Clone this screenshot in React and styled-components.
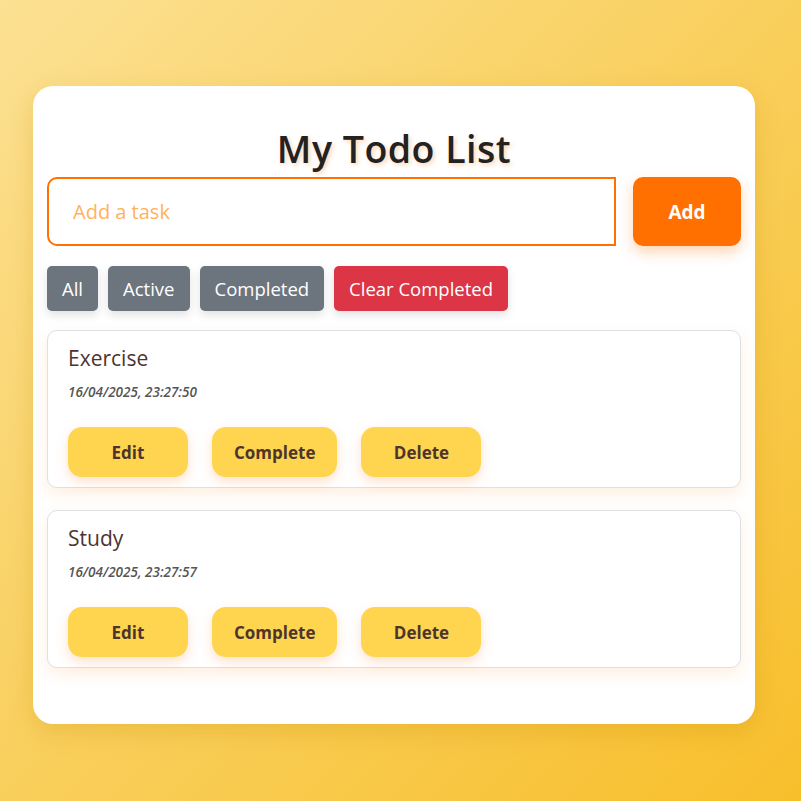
import React, { useState } from "react";
import styled, { createGlobalStyle } from "styled-components";

const Global = createGlobalStyle`
  html, body { margin: 0; padding: 0; }
  body {
    width: 801px;
    height: 801px;
    overflow: hidden;
    background: linear-gradient(135deg, #fce193 0%, #f9cf5c 50%, #f8bf2c 100%);
    font-family: "Open Sans", "Noto Sans", sans-serif;
  }
`;

const Page = styled.div`
  padding: 86px 46px 0 33px;
`;

const Card = styled.div`
  box-sizing: border-box;
  width: 722px;
  height: 638px;
  background: #fff;
  border-radius: 20px;
  box-shadow: 0 8px 24px rgba(200, 140, 0, 0.25);
  padding: 34px 14px 0 14px;
`;

const Title = styled.h1`
  margin: 0;
  text-align: center;
  font-size: 37.5px;
  line-height: 57px;
  font-weight: 600;
  color: #222;
  text-shadow: 2px 2px 4px rgba(255, 112, 0, 0.3);
  letter-spacing: 0.5px;
`;

const InputRow = styled.div`
  display: flex;
  gap: 17px;
  margin-bottom: 20px;
`;

const Input = styled.input`
  box-sizing: border-box;
  flex: 1;
  height: 69px;
  border: 2px solid #ff7000;
  border-radius: 10px 0 0 10px;
  padding: 0 24px;
  font-family: inherit;
  font-size: 20px;
  color: #333;
  outline: none;
  &::placeholder { color: #ffb25a; }
`;

const AddButton = styled.button`
  width: 108px;
  height: 69px;
  border: none;
  border-radius: 10px;
  background: #ff7000;
  color: #fff;
  font-family: inherit;
  font-size: 19px;
  font-weight: 700;
  box-shadow: 0 6px 14px rgba(255, 112, 0, 0.3);
  cursor: pointer;
`;

const Filters = styled.div`
  display: flex;
  gap: 10px;
  margin-bottom: 19px;
`;

const FilterButton = styled.button`
  height: 45px;
  padding: 0 15px;
  border: none;
  border-radius: 5px;
  background: ${(p) => (p.$danger ? "#dc3545" : "#6c757d")};
  color: #fff;
  font-family: inherit;
  font-size: 18.5px;
  box-shadow: 0 4px 10px rgba(0, 0, 0, 0.12);
  cursor: pointer;
`;

const List = styled.div`
  display: flex;
  flex-direction: column;
  gap: 22px;
`;

const TaskCard = styled.div`
  box-sizing: border-box;
  height: 158px;
  border: 1px solid #dde0e4;
  border-radius: 10px;
  padding: 12px 20px 0;
  box-shadow: 0 6px 16px rgba(255, 150, 50, 0.15);
  background: #fff;
`;

const TaskTitle = styled.div`
  font-size: 21px;
  line-height: 30px;
  font-weight: 500;
  color: #4e342e;
`;

const TaskDate = styled.div`
  margin-top: 10px;
  font-size: 13.5px;
  line-height: 18px;
  font-style: italic;
  font-weight: 600;
  color: #555;
`;

const Actions = styled.div`
  display: flex;
  gap: 24px;
  margin-top: 26px;
`;

const ActionButton = styled.button`
  min-width: 120px;
  height: 50px;
  padding: 0 22px;
  border: none;
  border-radius: 14px;
  background: #ffd54f;
  color: #4e342e;
  font-family: inherit;
  font-size: 17px;
  font-weight: 700;
  box-shadow: 0 5px 12px rgba(255, 140, 60, 0.25);
  cursor: pointer;
`;

const tasks = [
  { id: 1, title: "Exercise", date: "16/04/2025, 23:27:50" },
  { id: 2, title: "Study", date: "16/04/2025, 23:27:57" },
];

export default function App() {
  const [text, setText] = useState("");
  return (
    <>
      <Global />
      <Page>
        <Card>
          <Title>My Todo List</Title>
          <InputRow>
            <Input
              placeholder="Add a task"
              value={text}
              onChange={(e) => setText(e.target.value)}
            />
            <AddButton>Add</AddButton>
          </InputRow>
          <Filters>
            <FilterButton>All</FilterButton>
            <FilterButton>Active</FilterButton>
            <FilterButton>Completed</FilterButton>
            <FilterButton $danger>Clear Completed</FilterButton>
          </Filters>
          <List>
            {tasks.map((t) => (
              <TaskCard key={t.id}>
                <TaskTitle>{t.title}</TaskTitle>
                <TaskDate>{t.date}</TaskDate>
                <Actions>
                  <ActionButton>Edit</ActionButton>
                  <ActionButton>Complete</ActionButton>
                  <ActionButton>Delete</ActionButton>
                </Actions>
              </TaskCard>
            ))}
          </List>
        </Card>
      </Page>
    </>
  );
}
